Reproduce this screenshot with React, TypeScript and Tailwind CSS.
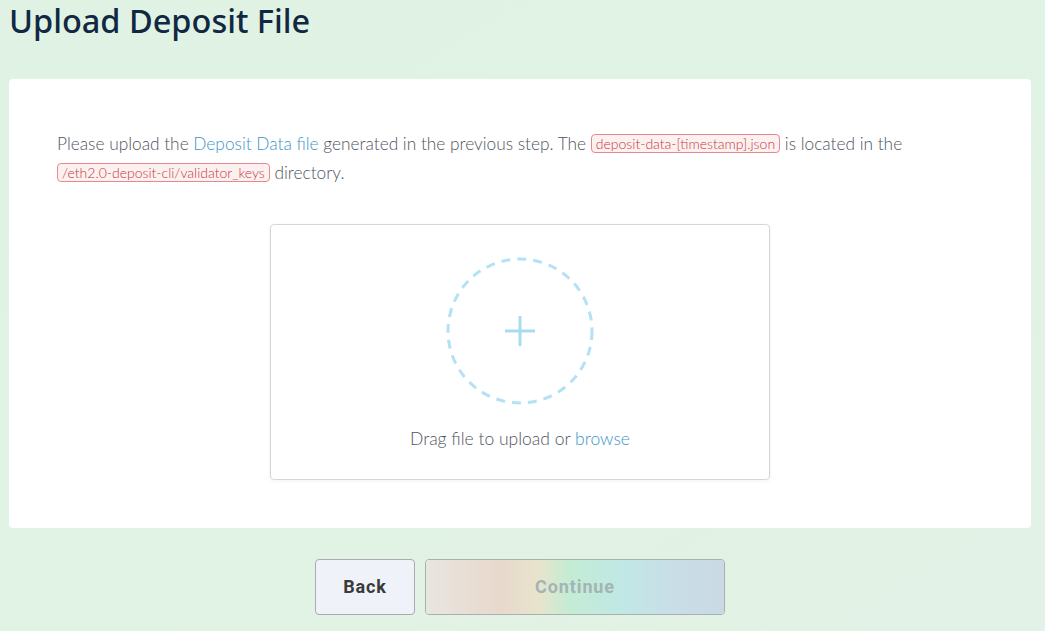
const CHIP = 'inline-block rounded border border-[#e58a8a] bg-[#fdf0f0] px-1 text-[14px] leading-[17px] text-[#c0393b] align-[1px]'

export default function App() {
  return (
    <main className="min-h-[631px] bg-gradient-to-br from-[#e0f2e4] via-[#e1f3e5] to-[#e2f2e6] pl-[9px] pr-[14px] font-['Lato',sans-serif]">
      <h1 className="pt-[1px] font-['Noto_Sans',sans-serif] text-[32.5px] font-medium leading-[40px] text-[#112843]">
        Upload Deposit File
      </h1>

      {/* main card */}
      <div className="mt-[38px] h-[449px] rounded bg-white px-12 pt-[50px]">
        <p className="text-[17.3px] font-light leading-[29px] text-[#4f5461]">
          Please upload the <span className="text-[#3d95c9]">Deposit Data file</span> generated in the previous step. The{' '}
          <span className={CHIP}>deposit-data-[timestamp].json</span> is located in the{' '}
          <span className={CHIP}>/eth2.0-deposit-cli/validator_keys</span> directory.
        </p>

        <div className="mx-auto mt-[37px] flex h-[256px] w-[500px] flex-col items-center rounded border border-[#d4d6da] shadow-[0_1px_4px_rgba(0,0,0,0.06)]">
          <div className="relative mt-[32px] flex h-[148px] w-[148px] items-center justify-center">
            <svg width="148" height="148" viewBox="0 0 148 148" className="absolute inset-0">
              <circle cx="74" cy="74" r="72" fill="none" stroke="#b4e2f4" strokeWidth="3" strokeDasharray="9 7" />
            </svg>
            <svg width="30" height="30" viewBox="0 0 30 30">
              <path d="M15 0v30M0 15h30" stroke="#a9dcf0" strokeWidth="3" />
            </svg>
          </div>
          <p className="mt-[21px] text-[17.5px] font-light text-[#4f5461]">
            Drag file to upload or <span className="text-[#3d95c9]">browse</span>
          </p>
        </div>
      </div>

      {/* actions */}
      <div className="mt-[31px] flex justify-center gap-[10px]">
        <button className="h-[56px] w-[100px] rounded-sm border border-[#a8abb0] bg-[#eff3f9] font-['Roboto',sans-serif] text-lg font-bold tracking-wider text-[#3a3a3a]">
          Back
        </button>
        <button className="h-[56px] w-[300px] overflow-hidden rounded-sm border border-[#a8b0b0] font-['Roboto',sans-serif] text-lg font-bold tracking-wider text-[#a4b4b4]">
          <span className="flex h-full w-full items-center justify-center bg-[linear-gradient(90deg,#e8e6e0_0%,#e8d8cc_25%,#e8e4cc_38%,#c4ecd4_48%,#c0e8e4_65%,#c8dfe8_80%,#cad9e4_100%)]">
            Continue
          </span>
        </button>
      </div>
    </main>
  )
}
